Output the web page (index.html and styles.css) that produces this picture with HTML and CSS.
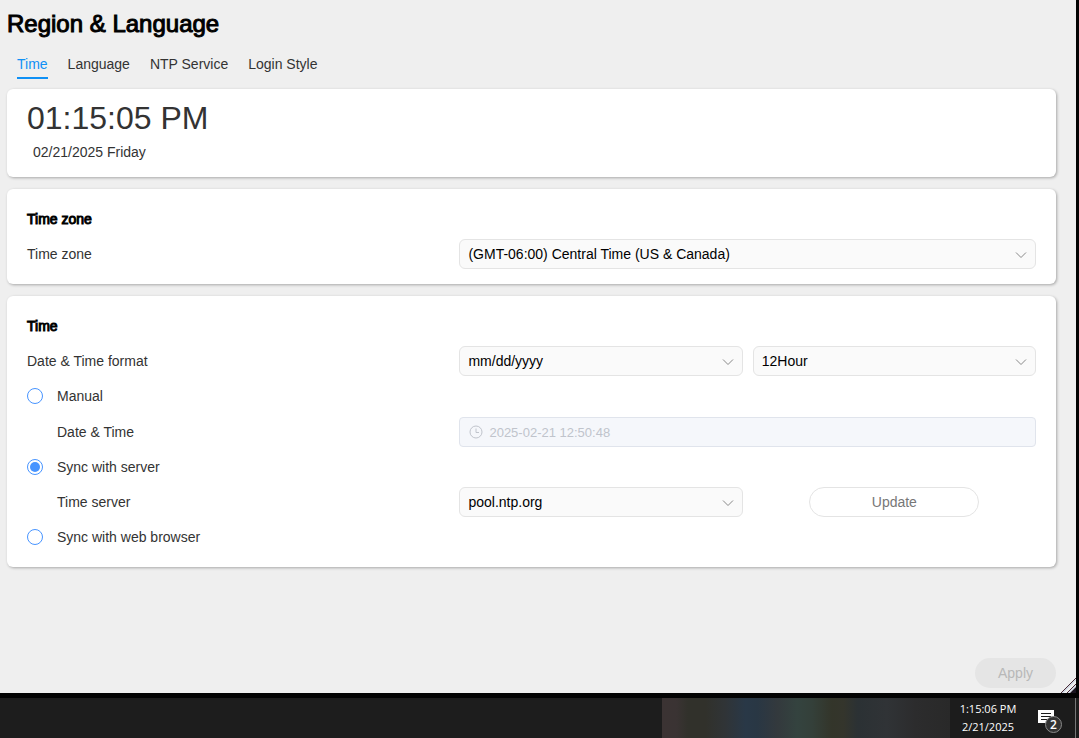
FILE: index.html
```html
<!DOCTYPE html>
<html lang="en">
<head>
  <meta charset="UTF-8">
  <title>Region &amp; Language</title>
  <link rel="stylesheet" href="styles.css">
</head>
<body>

  <div class="window">
    <h1>Region &amp; Language</h1>

    <nav class="tabs">
      <a href="#time" class="active">Time</a>
      <a href="#language">Language</a>
      <a href="#ntp">NTP Service</a>
      <a href="#login">Login Style</a>
    </nav>

    <main>
      <section class="card clock-card">
        <div class="clock">01:15:05 PM</div>
        <div class="date">02/21/2025 Friday</div>
      </section>

      <section class="card">
        <h2>Time zone</h2>
        <div class="row">
          <label for="timezone">Time zone</label>
          <div class="select">
            <select id="timezone">
              <option>(GMT-06:00) Central Time (US &amp; Canada)</option>
            </select>
            <svg viewBox="0 0 12 8"><path d="M1 1.5 L6 6.5 L11 1.5"/></svg>
          </div>
        </div>
      </section>

      <section class="card">
        <h2>Time</h2>
        <div class="row">
          <label for="date-format">Date &amp; Time format</label>
          <div class="pair">
            <div class="select">
              <select id="date-format">
                <option>mm/dd/yyyy</option>
              </select>
              <svg viewBox="0 0 12 8"><path d="M1 1.5 L6 6.5 L11 1.5"/></svg>
            </div>
            <div class="select">
              <select id="hour-format" aria-label="Hour format">
                <option>12Hour</option>
              </select>
              <svg viewBox="0 0 12 8"><path d="M1 1.5 L6 6.5 L11 1.5"/></svg>
            </div>
          </div>
        </div>

        <div class="radio">
          <input type="radio" name="sync" id="manual">
          <label for="manual">Manual</label>
        </div>
        <div class="row date-row">
          <label for="datetime" class="indent">Date &amp; Time</label>
          <div class="date-input">
            <svg viewBox="0 0 14 14"><circle cx="7" cy="7" r="6"/><path d="M7 3.5 V7.5 H10"/></svg>
            <input type="text" id="datetime" value="2025-02-21 12:50:48" disabled>
          </div>
        </div>

        <div class="radio">
          <input type="radio" name="sync" id="server" checked>
          <label for="server">Sync with server</label>
        </div>
        <div class="row">
          <label for="time-server" class="indent">Time server</label>
          <div class="pair">
            <div class="select">
              <select id="time-server">
                <option>pool.ntp.org</option>
              </select>
              <svg viewBox="0 0 12 8"><path d="M1 1.5 L6 6.5 L11 1.5"/></svg>
            </div>
            <button class="update">Update</button>
          </div>
        </div>

        <div class="radio">
          <input type="radio" name="sync" id="browser">
          <label for="browser">Sync with web browser</label>
        </div>
      </section>
    </main>

    <footer>
      <button class="apply" disabled>Apply</button>
    </footer>

    <svg class="grip" viewBox="0 0 16 16">
      <path class="corner" d="M16 10 V16 H10 Z"/>
      <path class="light" d="M2.5 16 L16 2.5 M8.5 16 L16 8.5"/>
      <path d="M1 16 L16 1 M7 16 L16 7"/>
    </svg>
  </div>

  <div class="taskbar">
    <div class="preview"></div>
    <div class="tray">
      <div class="tray-clock">
        <div>1:15:06 PM</div>
        <div>2/21/2025</div>
      </div>
      <div class="notify">
        <svg viewBox="0 0 16 16"><path d="M0 0 H16 V13 H13 V16 L9 13 H0 Z" fill="#fff"/><path d="M3 3.5 H13 M3 6.5 H13 M3 9.5 H9" stroke="#1c1c1c"/></svg>
        <span class="badge">2</span>
      </div>
    </div>
  </div>

</body>
</html>
```

FILE: styles.css
```css
* {
  box-sizing: border-box;
}

body {
  margin: 0;
  min-height: 100vh;
  display: flex;
  flex-direction: column;
  background: #030303;
  color: #333;
  font-family: "Liberation Sans", Arial, sans-serif;
  font-size: 14px;
  line-height: 20px;
}

.window {
  position: relative;
  flex: 1;
  display: flex;
  flex-direction: column;
  margin: 0 3px 5px 0;
  padding: 8px 20px 5px 7px;
  background: #efefef;
}

h1 {
  margin: 0;
  font-size: 24px;
  line-height: 32px;
  font-weight: normal;
  color: #000;
  -webkit-text-stroke: 1px #000;
}

/* tabs */
.tabs {
  display: flex;
  gap: 20px;
  margin: 14px 0 10px;
  padding-left: 10px;
}

.tabs a {
  padding-bottom: 3px;
  border-bottom: 2px solid transparent;
  color: #333;
  text-decoration: none;
}

.tabs a.active {
  color: #0f90f5;
  border-color: #0f90f5;
}

/* cards */
main {
  flex: 1;
  display: flex;
  flex-direction: column;
  gap: 12px;
}

.card {
  display: flex;
  flex-direction: column;
  gap: 5px;
  padding: 15px 20px;
  background: #fff;
  border-radius: 6px;
  box-shadow: 1px 1px 3px rgba(0,0,0,0.3);
}

.clock-card {
  gap: 4px;
  padding: 9px 20px 15px;
}

.clock {
  font-size: 32px;
  line-height: 40px;
}

.date {
  padding-left: 6px;
}

h2 {
  margin: 0;
  font-size: 14px;
  line-height: 30px;
  font-weight: normal;
  color: #000;
  -webkit-text-stroke: 1px #000;
}

.row {
  display: grid;
  grid-template-columns: 3fr 4fr;
  align-items: center;
}

.date-row {
  padding-top: 1px;
}

.indent {
  padding-left: 30px;
}

.pair {
  display: grid;
  grid-template-columns: 1fr 1fr;
  gap: 10px;
}

/* form controls */
input, select, button {
  font-family: inherit;
  font-size: 14px;
}

.select {
  position: relative;
}

.select select {
  appearance: none;
  display: block;
  width: 100%;
  height: 30px;
  padding: 0 30px 0 8px;
  border: 1px solid #e4e4e4;
  border-radius: 6px;
  background: #fafafa;
  color: #000;
}

.select svg {
  position: absolute;
  right: 9px;
  top: 12px;
  width: 12px;
  height: 8px;
  fill: none;
  stroke: #888;
  pointer-events: none;
}

.radio {
  display: flex;
  align-items: center;
  gap: 14px;
  height: 30px;
}

.radio input {
  appearance: none;
  width: 16px;
  height: 16px;
  margin: 0;
  padding: 2px;
  border: 1px solid #4794ff;
  border-radius: 50%;
}

.radio input:checked {
  background: #4794ff content-box;
}

.date-input {
  display: flex;
  align-items: center;
  gap: 6px;
  height: 30px;
  padding: 0 9px;
  border: 1px solid #e0e4ec;
  border-radius: 4px;
  background: #f5f7fb;
}

.date-input svg {
  width: 14px;
  height: 14px;
  fill: none;
  stroke: #c0c4cc;
}

.date-input input {
  flex: 1;
  min-width: 0;
  padding: 0;
  border: none;
  background: none;
  color: #c0c4cc;
  font-size: 13px;
}

button {
  height: 30px;
  border-radius: 15px;
}

.update {
  width: 60%;
  justify-self: center;
  border: 1px solid #e4e4e4;
  background: #fff;
  color: #777;
}

footer {
  display: flex;
  justify-content: flex-end;
}

.apply {
  width: 81px;
  border: none;
  background: #e5e5e5;
  color: #b8b8b8;
}

.grip {
  position: absolute;
  right: 0;
  bottom: 0;
  width: 16px;
  height: 16px;
  fill: none;
  stroke: #4a2a35;
}

.grip .light {
  stroke: #b5c4dc;
}

.grip .corner {
  fill: #1a1420;
  stroke: none;
}

/* taskbar */
.taskbar {
  display: flex;
  justify-content: flex-end;
  height: 40px;
  padding-right: 3px;
  background: #1d1d1d;
}

.preview {
  width: 288px;
  background: linear-gradient(90deg, #3b3333 0%, #3a3333 5%, #31312b 9%, #31312b 15%, #303437 22%, #293847 29%, #293744 33%, #33393d 40%, #34433f 47%, #34403a 52%, #33352a 59%, #34352c 63%, #2b3134 68%, #303336 78%, #2c2c2d 88%, #292929 100%);
}

.tray {
  display: flex;
  width: 126px;
  border-right: 1px solid #777;
  background: #1c1c1c;
}

.tray-clock {
  width: 76px;
  padding-top: 2px;
  font-family: "Open Sans", "Noto Sans", sans-serif;
  font-size: 11px;
  line-height: 18px;
  text-align: center;
  color: #fff;
}

.notify {
  position: relative;
  padding: 12px 0 0 12px;
}

.notify svg {
  display: block;
  width: 16px;
  height: 16px;
}

.badge {
  position: absolute;
  left: 19px;
  top: 18px;
  width: 17px;
  height: 17px;
  border: 1px solid #8a8a8a;
  border-radius: 50%;
  background: #333;
  color: #fff;
  font-family: "Open Sans", sans-serif;
  font-size: 12px;
  font-weight: 600;
  line-height: 15px;
  text-align: center;
}
```
